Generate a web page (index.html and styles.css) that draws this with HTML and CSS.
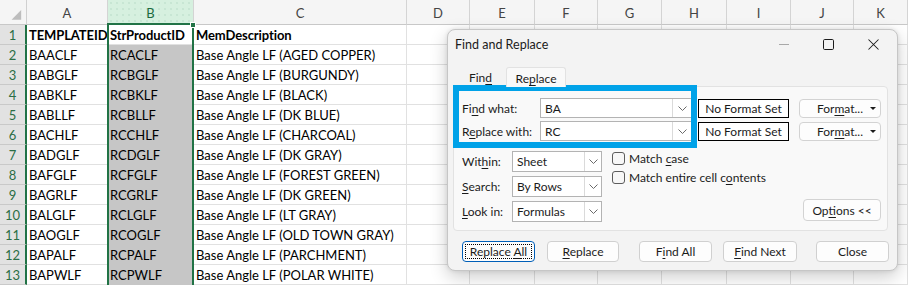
FILE: index.html
```html
<!DOCTYPE html>
<html>
<head>
<meta charset="utf-8">
<title>Find and Replace</title>
<link rel="stylesheet" href="styles.css">
</head>
<body>
<div class="sheet">
  <div class="grid">
    <span class="corner"><svg width="27" height="25" viewBox="0 0 27 25"><polygon points="22,10 22,20 12,20" fill="#bdbdbd"/></svg></span><span class="ch">A</span><span class="ch on">B</span><span class="ch">C</span><span class="ch">D</span><span class="ch">E</span><span class="ch">F</span><span class="ch">G</span><span class="ch">H</span><span class="ch">I</span><span class="ch">J</span><span class="ch">K</span>
    <span class="rh">1</span><span class="bold">TEMPLATEID</span><span class="bold">StrProductID</span><span class="bold">MemDescription</span><span></span><span></span><span></span><span></span><span></span><span></span><span></span><span></span>
    <span class="rh">2</span><span>BAACLF</span><span class="s">RCACLF</span><span>Base Angle LF (AGED COPPER)</span><span></span><span></span><span></span><span></span><span></span><span></span><span></span><span></span>
    <span class="rh">3</span><span>BABGLF</span><span class="s">RCBGLF</span><span>Base Angle LF (BURGUNDY)</span><span></span><span></span><span></span><span></span><span></span><span></span><span></span><span></span>
    <span class="rh">4</span><span>BABKLF</span><span class="s">RCBKLF</span><span>Base Angle LF (BLACK)</span><span></span><span></span><span></span><span></span><span></span><span></span><span></span><span></span>
    <span class="rh">5</span><span>BABLLF</span><span class="s">RCBLLF</span><span>Base Angle LF (DK BLUE)</span><span></span><span></span><span></span><span></span><span></span><span></span><span></span><span></span>
    <span class="rh">6</span><span>BACHLF</span><span class="s">RCCHLF</span><span>Base Angle LF (CHARCOAL)</span><span></span><span></span><span></span><span></span><span></span><span></span><span></span><span></span>
    <span class="rh">7</span><span>BADGLF</span><span class="s">RCDGLF</span><span>Base Angle LF (DK GRAY)</span><span></span><span></span><span></span><span></span><span></span><span></span><span></span><span></span>
    <span class="rh">8</span><span>BAFGLF</span><span class="s">RCFGLF</span><span>Base Angle LF (FOREST GREEN)</span><span></span><span></span><span></span><span></span><span></span><span></span><span></span><span></span>
    <span class="rh">9</span><span>BAGRLF</span><span class="s">RCGRLF</span><span>Base Angle LF (DK GREEN)</span><span></span><span></span><span></span><span></span><span></span><span></span><span></span><span></span>
    <span class="rh">10</span><span>BALGLF</span><span class="s">RCLGLF</span><span>Base Angle LF (LT GRAY)</span><span></span><span></span><span></span><span></span><span></span><span></span><span></span><span></span>
    <span class="rh">11</span><span>BAOGLF</span><span class="s">RCOGLF</span><span>Base Angle LF (OLD TOWN GRAY)</span><span></span><span></span><span></span><span></span><span></span><span></span><span></span><span></span>
    <span class="rh">12</span><span>BAPALF</span><span class="s">RCPALF</span><span>Base Angle LF (PARCHMENT)</span><span></span><span></span><span></span><span></span><span></span><span></span><span></span><span></span>
    <span class="rh">13</span><span>BAPWLF</span><span class="s">RCPWLF</span><span>Base Angle LF (POLAR WHITE)</span><span></span><span></span><span></span><span></span><span></span><span></span><span></span><span></span>
  </div>
  <div class="selbox"><span class="handle"></span></div>
</div>

<div class="dialog">
  <div class="titlebar">
    <div class="title">Find and Replace</div>
    <div class="wc">
      <span><svg width="10" height="10" viewBox="0 0 10 10"><path d="M0 5.5H10" stroke="#a8a8a8"/></svg></span>
      <span><svg width="11" height="11" viewBox="0 0 11 11"><rect x="0.5" y="0.5" width="10" height="10" rx="1.2" fill="none" stroke="#1b1b1b"/></svg></span>
      <span><svg width="11" height="11" viewBox="0 0 11 11"><path d="M0.5 0.5L10.5 10.5M10.5 0.5L0.5 10.5" stroke="#1b1b1b" stroke-width="1.05"/></svg></span>
    </div>
  </div>
  <div class="tabs">
    <div class="tab"><span>Fin<u>d</u></span></div>
    <div class="tab cur"><span>Re<u>p</u>lace</span></div>
  </div>
  <div class="panel">
    <div class="frow">
      <div class="flabel">Fi<u>n</u>d what:</div>
      <div class="combo"><span class="val">BA</span><span class="arr"><svg width="9" height="5" viewBox="0 0 9 5"><path d="M0.5 0.5l4 4 4-4" fill="none" stroke="#6a6a6a"/></svg></span></div>
      <div class="nofmt">No Format Set</div>
      <div class="fmtbtn"><span>For<u>m</u>at...</span><svg width="6" height="3" viewBox="0 0 6 3"><path d="M0 0h6L3 3z" fill="#1b1b1b"/></svg></div>
    </div>
    <div class="frow">
      <div class="flabel">R<u>e</u>place with:</div>
      <div class="combo"><span class="val">RC</span><span class="arr"><svg width="9" height="5" viewBox="0 0 9 5"><path d="M0.5 0.5l4 4 4-4" fill="none" stroke="#6a6a6a"/></svg></span></div>
      <div class="nofmt">No Format Set</div>
      <div class="fmtbtn"><span>For<u>m</u>at...</span><svg width="6" height="3" viewBox="0 0 6 3"><path d="M0 0h6L3 3z" fill="#1b1b1b"/></svg></div>
    </div>
    <div class="opts">
      <div class="selcol">
        <div class="srow"><div class="slabel">Wit<u>h</u>in:</div><div class="select"><span class="val">Sheet</span><span class="arr"><svg width="9" height="5" viewBox="0 0 9 5"><path d="M0.5 0.5l4 4 4-4" fill="none" stroke="#6a6a6a"/></svg></span></div></div>
        <div class="srow"><div class="slabel"><u>S</u>earch:</div><div class="select"><span class="val">By Rows</span><span class="arr"><svg width="9" height="5" viewBox="0 0 9 5"><path d="M0.5 0.5l4 4 4-4" fill="none" stroke="#6a6a6a"/></svg></span></div></div>
        <div class="srow"><div class="slabel"><u>L</u>ook in:</div><div class="select"><span class="val">Formulas</span><span class="arr"><svg width="9" height="5" viewBox="0 0 9 5"><path d="M0.5 0.5l4 4 4-4" fill="none" stroke="#6a6a6a"/></svg></span></div></div>
      </div>
      <div class="checks">
        <div class="chk"><span class="box"></span><span>Match <u>c</u>ase</span></div>
        <div class="chk"><span class="box"></span><span>Match entire cell c<u>o</u>ntents</span></div>
      </div>
      <div class="optbtn"><span>Op<u>t</u>ions &lt;&lt;</span></div>
    </div>
    <div class="mark"></div>
  </div>
  <div class="btns">
    <div class="btn def b1"><span class="focus"><span>Replace <u>A</u>ll</span></span></div>
    <div class="btn b2"><span><u>R</u>eplace</span></div>
    <div class="btn b3"><span>F<u>i</u>nd All</span></div>
    <div class="btn b4"><span><u>F</u>ind Next</span></div>
    <div class="btn b5"><span>Close</span></div>
  </div>
</div>
</body>
</html>
```

FILE: styles.css
```css
* { box-sizing: border-box; }
html, body { margin: 0; padding: 0; }
body {
  width: 908px;
  height: 285px;
  overflow: hidden;
  position: relative;
  background: #ffffff;
  font-family: "Lato", "Liberation Sans", sans-serif;
}

/* spreadsheet */
.sheet { position: relative; }
.grid {
  display: grid;
  grid-template-columns: 27px 81px 86px 213px 63px 65px 63px 64px 65px 64px 63px 54px;
  grid-template-rows: 25px;
  grid-auto-rows: 20px;
  font-size: 13px;
  color: #000;
}
.grid > span {
  border-right: 1px solid #e1e1e1;
  border-bottom: 1px solid #e1e1e1;
  padding: 0 2px;
  white-space: nowrap;
  overflow: hidden;
  display: flex;
  align-items: center;
}
.grid > .corner {
  padding: 0;
  background: #f5f5f5;
  border-right-color: #d0d0d0;
  border-bottom-color: #c8c8c8;
}
.grid > .ch {
  background: #f5f5f5;
  border-right-color: #d4d4d4;
  border-bottom-color: #c8c8c8;
  justify-content: center;
  color: #444444;
  font-size: 13px;
  padding-top: 1px;
}
.grid > .ch.on {
  background-color: #d6f0df;
  background-image: radial-gradient(circle, rgba(33,115,70,0.12) 0.6px, transparent 0.9px);
  background-size: 6px 6px;
  color: #1c6b3f;
}
.grid > .rh {
  background: #e2e2e2;
  border-right: 2px solid #217346;
  border-bottom-color: #c9c9c9;
  justify-content: center;
  color: #2b6e45;
  font-size: 13px;
  padding: 0;
}
.grid > .s { background: #c6c6c6; border-bottom-color: #c6c6c6; }
.grid > .bold { font-weight: 700; letter-spacing: -0.1px; }

.selbox {
  position: absolute;
  left: 107px;
  top: 23px;
  width: 87px;
  height: 270px;
  border: 2px solid #217346;
}
.selbox .handle {
  position: absolute;
  right: -4px;
  top: -3px;
  width: 6px;
  height: 6px;
  background: #217346;
  border: 1px solid #ffffff;
}

/* dialog */
.dialog {
  position: absolute;
  left: 447px;
  top: 29px;
  width: 451px;
  height: 242px;
  background: #f3f3f3;
  border: 1px solid #c6c6c6;
  border-radius: 8px;
  box-shadow: 0 6px 18px rgba(0,0,0,0.20), 0 0 4px rgba(0,0,0,0.10);
  font-family: "Lato", "Liberation Sans", sans-serif;
  font-size: 12px;
  color: #1b1b1b;
  display: flex;
  flex-direction: column;
}
.dialog u { text-decoration-thickness: 1px; text-underline-offset: 2px; }
.titlebar {
  height: 28px;
  display: flex;
  align-items: center;
  padding-left: 7px;
}
.title { flex: 1; font-size: 12.5px; }
.wc { display: flex; margin-right: 1px; }
.wc span {
  width: 45px;
  height: 28px;
  display: flex;
  align-items: center;
  justify-content: center;
}
.tabs {
  display: flex;
  margin: 9px 0 0 7px;
  height: 19px;
  position: relative;
  z-index: 1;
}
.tab {
  width: 51px;
  height: 19px;
  display: flex;
  align-items: center;
  justify-content: center;
  padding-top: 2px;
}
.tab.cur {
  width: 60px;
  height: 20px;
  background: #f9f9f9;
  border: 1px solid #e2e2e2;
  border-bottom: none;
  border-radius: 3px 3px 0 0;
}
.panel {
  position: relative;
  margin: 0 9px 0 5px;
  height: 145px;
  background: #f9f9f9;
  border: 1px solid #e2e2e2;
  border-radius: 0 4px 4px 4px;
  padding: 11px 6px 0 8px;
}
.mark {
  position: absolute;
  left: -1px;
  top: -2px;
  width: 244px;
  height: 63px;
  border: 6px solid #00a2e8;
}
.frow {
  display: flex;
  align-items: center;
  height: 20px;
}
.frow + .frow { margin-top: 3px; }
.flabel { width: 78px; }
.combo, .select {
  height: 20px;
  background: #ffffff;
  border: 1px solid #b3b3b3;
  display: flex;
  align-items: stretch;
}
.combo { width: 152px; }
.select { width: 90px; height: 21px; }
.val { flex: 1; padding-left: 4px; display: flex; align-items: center; }
.arr {
  width: 19px;
  border-left: 1px solid #dadada;
  display: flex;
  align-items: center;
  justify-content: center;
}
.select .arr { width: 17px; }
.nofmt {
  margin-left: 6px;
  width: 91px;
  height: 19px;
  background: #ffffff;
  border: 1px solid #000000;
  display: flex;
  align-items: center;
  justify-content: center;
}
.fmtbtn {
  margin-left: 10px;
  width: 82px;
  height: 19px;
  background: #fdfdfd;
  border: 1px solid #d3d3d3;
  border-radius: 4px;
  display: flex;
  align-items: center;
  padding: 0 4px 0 17px;
}
.fmtbtn span { flex: 1; }
.opts {
  display: flex;
  margin-top: 10px;
}
.selcol { display: flex; flex-direction: column; gap: 4px; }
.srow { display: flex; align-items: center; height: 21px; }
.slabel { width: 50px; }
.checks { margin-left: 10px; display: flex; flex-direction: column; }
.chk { display: flex; align-items: flex-start; height: 19px; line-height: 15px; }
.box {
  width: 13px;
  height: 13px;
  margin: 1px 4px 0 0;
  border: 1px solid #5c5c5c;
  border-radius: 3px;
  background: #f7f7f7;
}
.optbtn {
  margin-left: auto;
  align-self: flex-end;
  margin-bottom: 1px;
  width: 78px;
  height: 22px;
  background: #fdfdfd;
  border: 1px solid #d3d3d3;
  border-radius: 4px;
  display: flex;
  align-items: center;
  justify-content: center;
}
.btns {
  display: flex;
  margin: 10px 0 0 14px;
}
.btn {
  height: 21px;
  background: #fdfdfd;
  border: 1px solid #d0d0d0;
  border-radius: 4px;
  display: flex;
  align-items: center;
  justify-content: center;
}
.btn.def { border-color: #005fb8; padding: 2px; }
.focus {
  flex: 1;
  align-self: stretch;
  border: 1px dotted #000000;
  display: flex;
  align-items: center;
  justify-content: center;
}
.b1 { width: 73px; }
.b2 { width: 72px; margin-left: 12px; }
.b3 { width: 73px; margin-left: 20px; }
.b4 { width: 74px; margin-left: 11px; }
.b5 { width: 73px; margin-left: 19px; }
```
